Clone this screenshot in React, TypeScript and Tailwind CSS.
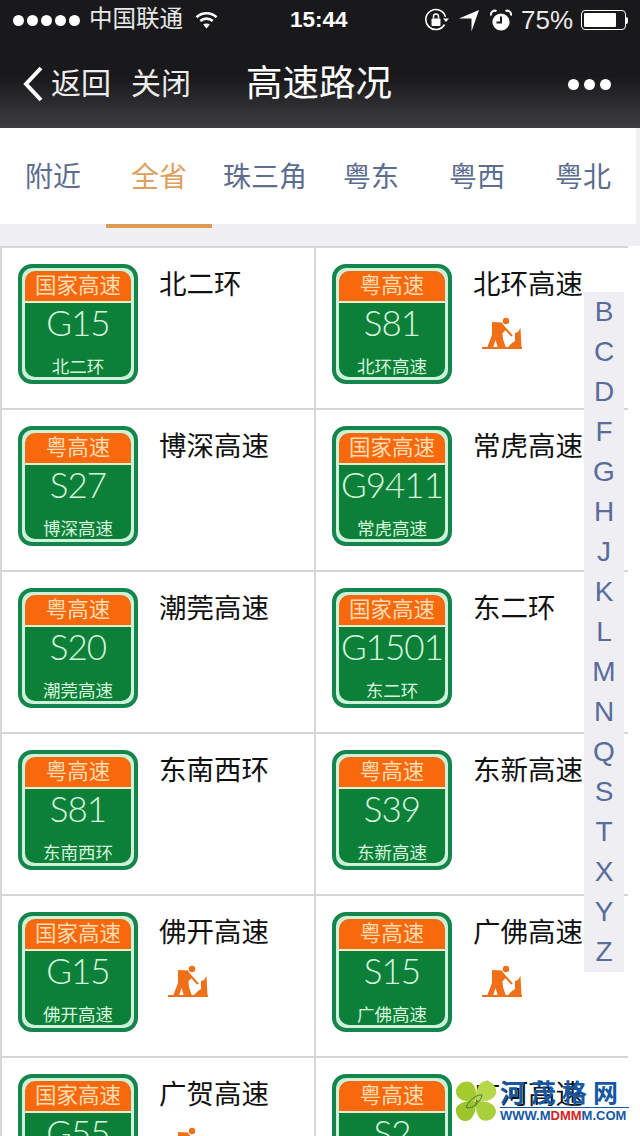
import React from 'react';

// Road list, left to right and top to bottom
const roads = [
  { name: '北二环', code: 'G15', national: true, works: false },
  { name: '北环高速', code: 'S81', national: false, works: true },
  { name: '博深高速', code: 'S27', national: false, works: false },
  { name: '常虎高速', code: 'G9411', national: true, works: false },
  { name: '潮莞高速', code: 'S20', national: false, works: false },
  { name: '东二环', code: 'G1501', national: true, works: false },
  { name: '东南西环', code: 'S81', national: false, works: false },
  { name: '东新高速', code: 'S39', national: false, works: false },
  { name: '佛开高速', code: 'G15', national: true, works: true },
  { name: '广佛高速', code: 'S15', national: false, works: true },
  { name: '广贺高速', code: 'G55', national: true, works: true },
  { name: '广河高速', code: 'S2', national: false, works: false },
];

const tabs = ['附近', '全省', '珠三角', '粤东', '粤西', '粤北'];
const letters = ['B', 'C', 'D', 'F', 'G', 'H', 'J', 'K', 'L', 'M', 'N', 'Q', 'S', 'T', 'X', 'Y', 'Z'];

const WifiIcon = () => (
  <svg width="23" height="18" viewBox="0 0 23 18" fill="none" stroke="white" strokeWidth="2.6">
    <path d="M1.5 6.2C7 1 16 1 21.5 6.2" />
    <path d="M5.3 10C8.8 6.8 14.2 6.8 17.7 10" />
    <path d="M11.5 17.5L8.2 13.6C10 12.1 13 12.1 14.8 13.6Z" fill="white" stroke="none" />
  </svg>
);

const RotationLockIcon = () => (
  <svg width="25" height="24" viewBox="0 0 25 24" fill="none">
    <path d="M20.5 16.5A10 10 0 1 1 21.5 9" stroke="white" strokeWidth="1.6" />
    <path d="M19 10.5h6l-3 3.4Z" fill="white" />
    <rect x="7.5" y="10.5" width="9" height="7.5" rx="1" fill="white" />
    <path d="M9.5 10.5V8.5a2.5 2.5 0 0 1 5 0v2" stroke="white" strokeWidth="1.5" />
  </svg>
);

const LocationIcon = () => (
  <svg width="22" height="23" viewBox="0 0 22 23">
    <path d="M21 1L13.5 22.5V9.5H1Z" fill="white" />
  </svg>
);

const AlarmIcon = () => (
  <svg width="22" height="23" viewBox="0 0 22 23" fill="none">
    <circle cx="11" cy="13" r="8.6" fill="white" />
    <path d="M11 7.5V13.5H6.5" stroke="#1b1b1d" strokeWidth="2" />
    <path d="M1 6.5A4 4 0 0 1 6.5 2" stroke="white" strokeWidth="2" />
    <path d="M21 6.5A4 4 0 0 0 15.5 2" stroke="white" strokeWidth="2" />
  </svg>
);

// Man digging, the "road works" mark
const WorksIcon = () => (
  <svg width="40" height="32" viewBox="0 0 40 32" fill="#f0701a">
    <circle cx="24" cy="4" r="3.2" />
    <path d="M10 5L20 5.5L24 13L20.5 16L21 22L24 31H16L13.5 23L11 31H5L10 18Z" />
    <path d="M20 8L30 19" stroke="#f0701a" strokeWidth="2" />
    <path d="M25 31L30 26L33 24L33 16L36 15L38.5 11L39.5 31Z" />
    <rect x="0" y="30" width="40" height="2" />
  </svg>
);

const RoadSign = ({ name, code, national }: { name: string; code: string; national: boolean }) => (
  <div className="h-[120px] w-[120px] shrink-0 rounded-[14px] border-[4px] border-[#16854c] bg-[#cdf2da] p-[3px]">
    <div className="flex h-full flex-col overflow-hidden rounded-[10px]">
      <div className="flex h-[30px] shrink-0 items-center justify-center bg-[#f7690c] pt-[2px] text-[21.5px] leading-none text-[#fbdcb2]">
        {national ? '国家高速' : '粤高速'}
      </div>
      <div className="h-[2px] shrink-0 bg-[#e6f0cf]" />
      <div className="flex flex-1 flex-col items-center bg-[#0c8038] text-[#d6f6de]">
        <div className="mt-[-1px] font-['Lato',sans-serif] text-[35px] font-light leading-[40px] tracking-[-1px]">{code}</div>
        <div className="mt-auto text-[17.5px] leading-[20px]">{name}</div>
      </div>
    </div>
  </div>
);

export default function App() {
  return (
    <div className="relative h-[1136px] w-[640px] overflow-hidden bg-white font-['Liberation_Sans','Noto_Sans_CJK_SC',sans-serif]">
      {/* Phone header */}
      <div className="h-[128px] bg-gradient-to-b from-[#19191b] from-60% to-[#3f3f41] text-white">
        <div className="flex h-[40px] items-center pl-[13px]">
          <div className="flex gap-[3px]">
            {[0, 1, 2, 3, 4].map((i) => (
              <div key={i} className="h-[11px] w-[11px] rounded-full bg-white" />
            ))}
          </div>
          <span className="ml-[9px] text-[23.5px] leading-none text-[#e8e8e8]">中国联通</span>
          <div className="ml-[12px]">
            <WifiIcon />
          </div>
          <span className="ml-[72px] w-[59px] text-[22.5px] font-bold leading-none">15:44</span>
          <div className="ml-[75px]">
            <RotationLockIcon />
          </div>
          <div className="ml-[9px]">
            <LocationIcon />
          </div>
          <div className="ml-[10px]">
            <AlarmIcon />
          </div>
          <span className="ml-[9px] text-[26px] leading-none text-[#e8e8e8]">75%</span>
          <div className="ml-[8px] flex items-center">
            <div className="h-[20px] w-[45px] rounded-[4px] border border-white p-[2px]">
              <div className="h-full w-[32px] rounded-[1px] bg-white" />
            </div>
            <div className="h-[7px] w-[2px] rounded-r-sm bg-white" />
          </div>
        </div>
        <div className="flex h-[88px] items-center pl-[22px]">
          <svg width="22" height="36" viewBox="0 0 22 36" fill="none" stroke="white" strokeWidth="4">
            <path d="M19 2L4 18L19 34" />
          </svg>
          <span className="ml-[7px] text-[30px] leading-none text-[#ececec]">返回</span>
          <span className="ml-[20px] text-[30px] leading-none text-[#ececec]">关闭</span>
          <span className="ml-[55px] text-[36.5px] leading-none">高速路况</span>
          <div className="ml-[176px] flex gap-[5px]">
            <div className="h-[11px] w-[11px] rounded-full bg-white" />
            <div className="h-[11px] w-[11px] rounded-full bg-white" />
            <div className="h-[11px] w-[11px] rounded-full bg-white" />
          </div>
        </div>
      </div>

      {/* Tabs */}
      <div className="bg-[#f0f0f2]">
        <div className="grid w-[636px] grid-cols-6">
          {tabs.map((tab, i) => (
            <div key={tab} className="flex h-[100px] flex-col bg-white">
              <div
                className={`flex h-[96px] items-center justify-center pt-[3px] text-[28px] ${i === 1 ? 'text-[#dd9f5c]' : 'text-[#5c6d8f]'}`}
              >
                {tab}
              </div>
              <div className={`h-[4px] ${i === 1 ? 'bg-[#de9a52]' : 'bg-[#f0f0f2]'}`} />
            </div>
          ))}
        </div>
        <div className="h-[18px]" />
      </div>

      {/* Road grid */}
      <div className="grid w-[628px] grid-cols-[314px_312px] border-t-2 border-l-2 border-[#d6d6da]">
        {roads.map((road, i) => (
          <div
            key={road.name + road.code}
            className={`flex h-[162px] border-b-2 border-[#d6d6da] pt-[16px] pl-[16px] ${i % 2 === 0 ? 'border-r-2' : ''}`}
          >
            <RoadSign name={road.name} code={road.code} national={road.national} />
            <div className="ml-[21px] flex flex-col">
              <div className="mt-[3px] whitespace-nowrap text-[27.5px] leading-[36px] text-[#111]">{road.name}</div>
              {road.works && (
                <div className="mt-[14px] ml-[9px]">
                  <WorksIcon />
                </div>
              )}
            </div>
          </div>
        ))}
      </div>

      {/* Alphabet index */}
      <div className="absolute top-[292px] left-[584px] flex w-[40px] flex-col bg-[#eeeef3]">
        {letters.map((letter) => (
          <div key={letter} className="flex h-[40px] items-center justify-center text-[28px] leading-none text-[#586c9c]">
            {letter}
          </div>
        ))}
      </div>

      {/* Watermark */}
      <div className="absolute top-[1080px] left-[455px] flex items-start">
        <svg width="42" height="42" viewBox="0 0 42 42">
          <path d="M20.5 20.5C9 23 0 19 1 10C3 3 10 0 15 2C21 5 22 13 20.5 20.5Z" fill="#a4cc2e" />
          <path d="M21.5 20.5C20 10 24 0 32 1C39 2 42 9 41 14C38 21 29 22 21.5 20.5Z" fill="#b6d84a" />
          <path d="M20.5 21.5C22 32 17 42 9 41C3 40 0 33 1 28C4 22 13 20 20.5 21.5Z" fill="#9cc62c" />
          <path d="M21.5 21.5C32 20 41 24 41 32C39 40 32 42 27 40C22 37 20 29 21.5 21.5Z" fill="#a8d03a" />
          <path d="M11 27C15 19 23 14 27 15C26 21 20 27 14 28Z" fill="none" stroke="#3d7a3a" strokeWidth="1" />
        </svg>
        <div className="ml-[3px] flex w-[129px] flex-col">
          <div className="whitespace-nowrap text-[25px] font-bold leading-[27px] tracking-[6px] text-[#1458a4]">河茂格网</div>
          <div className="h-[1px] bg-[#1458a4]" />
          <div className="mt-[1px] whitespace-nowrap text-[13px] font-bold leading-[13px] text-[#1458a4]">
            WWW.M<span className="text-[#d8201c]">DMM</span>M.COM
          </div>
        </div>
      </div>
    </div>
  );
}
